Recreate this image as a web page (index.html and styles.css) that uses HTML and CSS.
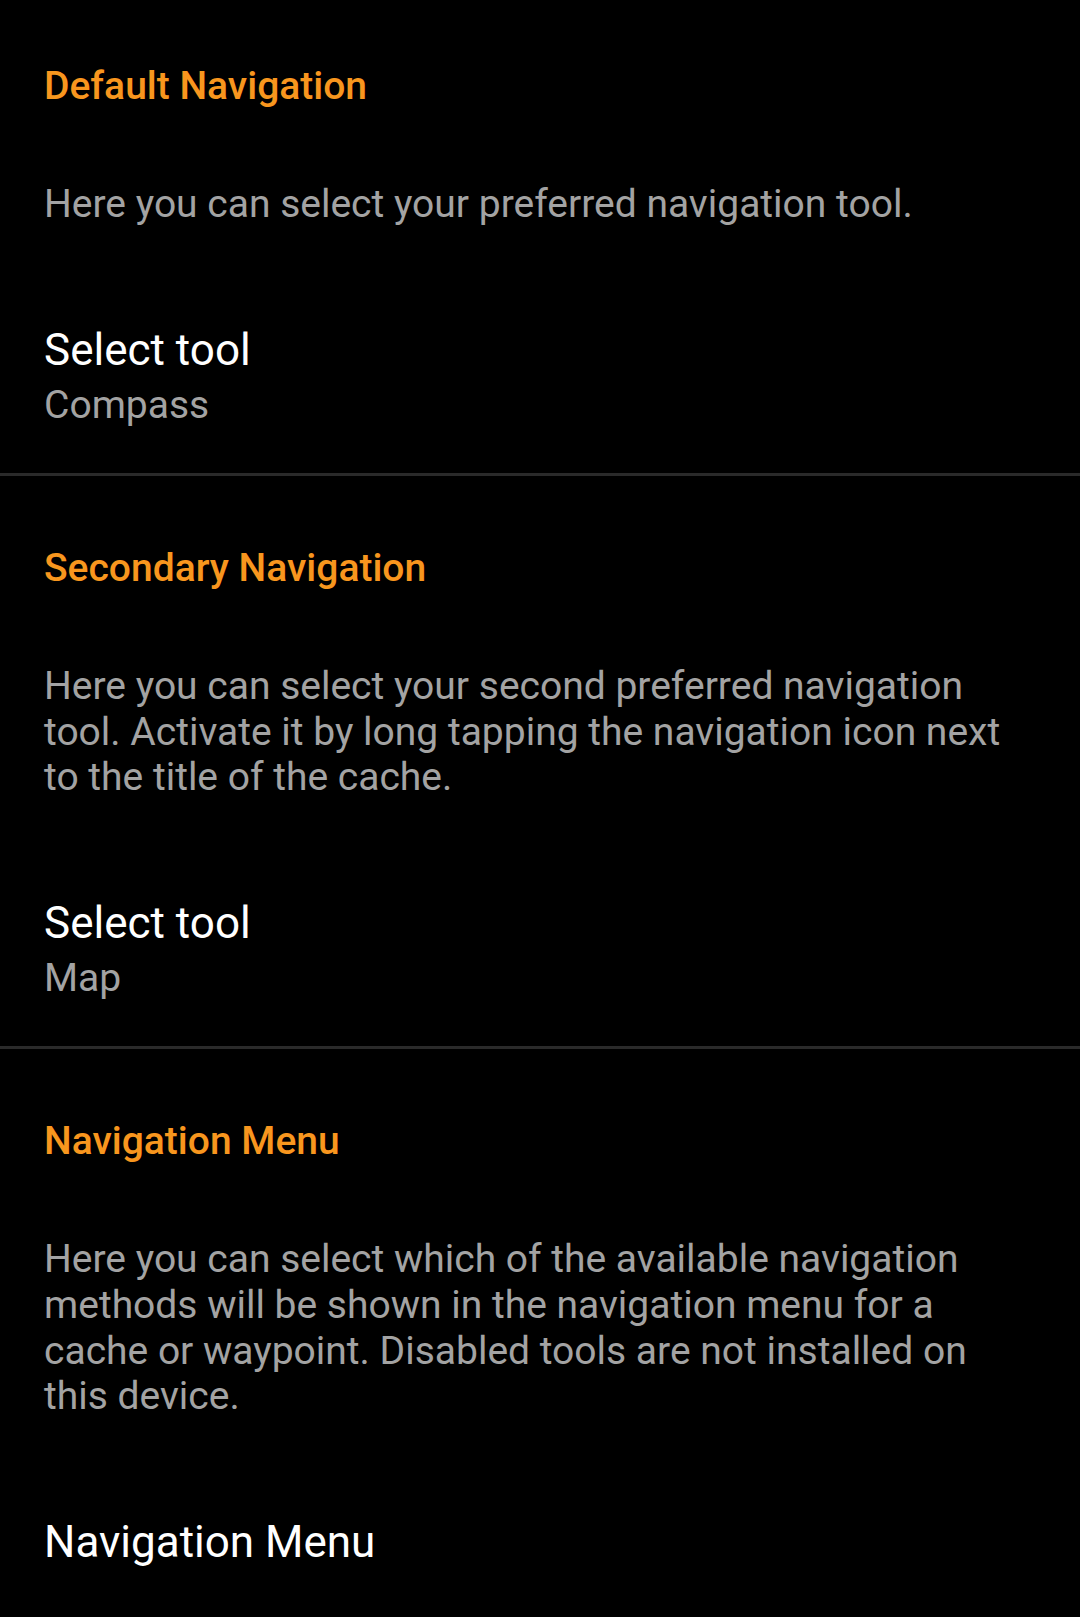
FILE: index.html
```html
<!DOCTYPE html>
<html lang="en">
<head>
<meta charset="utf-8">
<title>Navigation settings</title>
<link rel="stylesheet" href="styles.css">
</head>
<body>
<main class="prefs">
  <section class="group group-first">
    <h2 class="category">Default Navigation</h2>
    <p class="info">Here you can select your preferred navigation tool.</p>
    <div class="pref">
      <div class="pref-title">Select tool</div>
      <div class="pref-summary">Compass</div>
    </div>
  </section>
  <section class="group">
    <h2 class="category">Secondary Navigation</h2>
    <p class="info">Here you can select your second preferred navigation tool. Activate it by long tapping the navigation icon next to the title of the cache.</p>
    <div class="pref">
      <div class="pref-title">Select tool</div>
      <div class="pref-summary">Map</div>
    </div>
  </section>
  <section class="group group-last">
    <h2 class="category">Navigation Menu</h2>
    <p class="info">Here you can select which of the available navigation methods will be shown in the navigation menu for a cache or waypoint. Disabled tools are not installed on this device.</p>
    <div class="pref">
      <div class="pref-title">Navigation Menu</div>
    </div>
  </section>
</main>
</body>
</html>
```
FILE: styles.css
```css
html, body {
  margin: 0;
  padding: 0;
  background: #000000;
}

body {
  font-family: Roboto, "Noto Sans", "Liberation Sans", sans-serif;
  width: 1080px;
  height: 1617px;
  overflow: hidden;
}

.prefs {
  display: flex;
  flex-direction: column;
}

.group {
  display: flex;
  flex-direction: column;
  padding: 70px 44px 44.5px 44px;
  border-bottom: 3px solid #2a2a2a;
}

.group-first {
  padding-top: 63.5px;
}

.group-last {
  border-bottom: none;
}

.category {
  margin: 0;
  font-size: 39px;
  line-height: 45.5px;
  font-weight: 500;
  color: #f8961e;
}

.info {
  margin: 73px 0 0 0;
  font-size: 39px;
  line-height: 45.6px;
  font-weight: 400;
  color: #a3a3a3;
}

.pref {
  display: flex;
  flex-direction: column;
  gap: 7px;
  margin-top: 96px;
}

.pref-title {
  font-size: 44px;
  line-height: 52px;
  color: #ffffff;
}

.pref-summary {
  font-size: 39px;
  line-height: 45.5px;
  color: #a3a3a3;
}
```
